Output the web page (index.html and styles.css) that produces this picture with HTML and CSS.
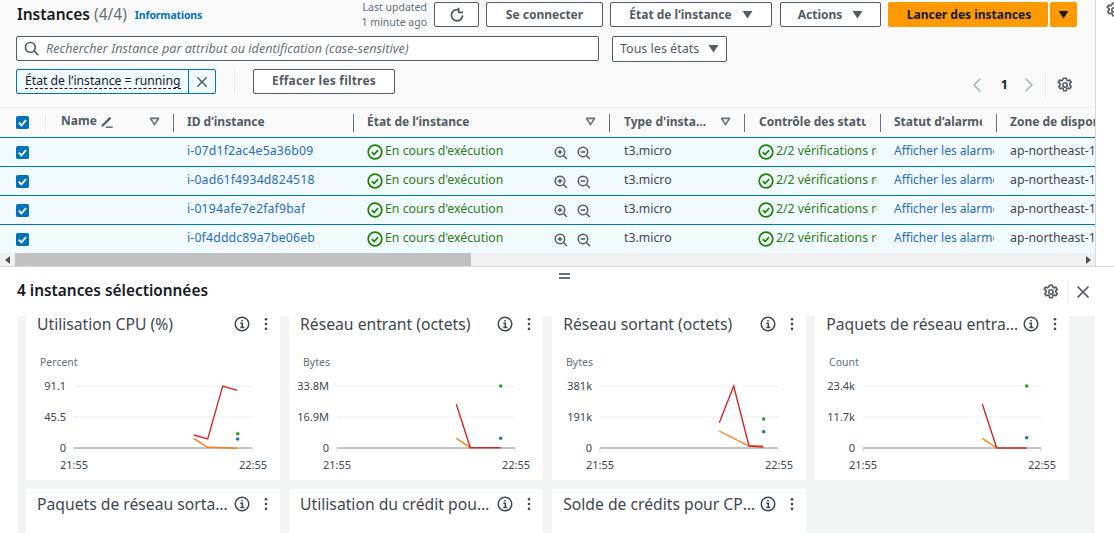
FILE: index.html
```html
<!DOCTYPE html>
<html lang="fr">
<head>
<meta charset="utf-8">
<title>Instances</title>
<link rel="stylesheet" href="styles.css">
</head>
<body>
<svg class="defs" width="0" height="0" aria-hidden="true">
  <symbol id="gear" viewBox="0 0 16 16"><path d="M6.6 1.2h2.8l.4 1.9 1.2.6 1.8-.7 1.4 2.4-1.4 1.3v1.4l1.4 1.3-1.4 2.4-1.8-.7-1.2.7-.4 1.9H6.6l-.4-1.9-1.2-.7-1.8.7-1.4-2.4 1.4-1.3V6.7L1.2 5.4l1.4-2.4 1.8.7 1.2-.6z" fill="none" stroke="currentColor" stroke-width="1.6" stroke-linejoin="round"/><circle cx="8" cy="8" r="2.2" fill="none" stroke="currentColor" stroke-width="1.6"/></symbol>
  <symbol id="check" viewBox="0 0 16 16"><circle cx="8" cy="8" r="6.8" fill="none" stroke="currentColor" stroke-width="1.7"/><path d="M4.8 8.2l2.3 2.3 4-4.3" fill="none" stroke="currentColor" stroke-width="1.7"/></symbol>
  <symbol id="zin" viewBox="0 0 16 16"><circle cx="6.8" cy="6.8" r="5.4" fill="none" stroke="currentColor" stroke-width="1.7"/><path d="M10.8 10.8l4 4M4.2 6.8h5.2M6.8 4.2v5.2" fill="none" stroke="currentColor" stroke-width="1.7"/></symbol>
  <symbol id="zout" viewBox="0 0 16 16"><circle cx="6.8" cy="6.8" r="5.4" fill="none" stroke="currentColor" stroke-width="1.7"/><path d="M10.8 10.8l4 4M4.2 6.8h5.2" fill="none" stroke="currentColor" stroke-width="1.7"/></symbol>
  <symbol id="caret" viewBox="0 0 12 10"><path d="M0.5 1h11L6 9.5z" fill="currentColor"/></symbol>
  <symbol id="sort" viewBox="0 0 12 10"><path d="M1.5 1.5h9L6 8.5z" fill="none" stroke="currentColor" stroke-width="1.8" stroke-linejoin="round"/></symbol>
  <symbol id="tick" viewBox="0 0 14 14"><rect width="14" height="14" rx="2" fill="#0073bb"/><path d="M3 7.2l2.8 2.8 5-5.6" fill="none" stroke="#fff" stroke-width="2"/></symbol>
  <symbol id="info" viewBox="0 0 16 16"><circle cx="8" cy="8" r="6.8" fill="none" stroke="currentColor" stroke-width="1.5"/><path d="M6.3 7.2H8.3V11.5M6.3 11.5h4M8 4v1.6" fill="none" stroke="currentColor" stroke-width="1.6"/></symbol>
  <symbol id="dots" viewBox="0 0 4 16"><circle cx="2" cy="2.5" r="1.5" fill="currentColor"/><circle cx="2" cy="8" r="1.5" fill="currentColor"/><circle cx="2" cy="13.5" r="1.5" fill="currentColor"/></symbol>
  <symbol id="close" viewBox="0 0 14 14"><path d="M1.5 1.5l11 11M12.5 1.5l-11 11" fill="none" stroke="currentColor" stroke-width="1.7"/></symbol>
</svg>

<div class="upper">
  <main class="top">
    <div class="bar bar-1">
      <h1 class="title">Instances <span class="count">(4/4)</span></h1>
      <a class="info-link">Informations</a>
      <div class="actions">
        <div class="updated">Last updated<br>1 minute ago</div>
        <button class="btn btn-refresh"><svg class="i16" viewBox="0 0 16 16"><path d="M13.6 8.4A5.6 5.6 0 1 1 9.8 2.9" fill="none" stroke="currentColor" stroke-width="1.8"/><path d="M9.6 0.8v4.6h4.4" fill="none" stroke="currentColor" stroke-width="1.8"/></svg></button>
        <button class="btn btn-connect">Se connecter</button>
        <button class="btn btn-state">État de l’instance <svg class="caret"><use href="#caret"/></svg></button>
        <button class="btn btn-act">Actions <svg class="caret"><use href="#caret"/></svg></button>
        <div class="launch">
          <button class="btn-primary btn-launch">Lancer des instances</button>
          <button class="btn-primary btn-more"><svg class="caret dark"><use href="#caret"/></svg></button>
        </div>
      </div>
    </div>

    <div class="bar bar-2">
      <div class="search">
        <svg class="i15" viewBox="0 0 16 16"><circle cx="6.8" cy="6.8" r="5.2" fill="none" stroke="currentColor" stroke-width="1.8"/><path d="M10.6 10.6l4.6 4.6" stroke="currentColor" stroke-width="1.8"/></svg>
        <span class="placeholder">Rechercher Instance par attribut ou identification (case-sensitive)</span>
      </div>
      <div class="select">Tous les états <svg class="caret"><use href="#caret"/></svg></div>
    </div>

    <div class="bar bar-3">
      <div class="token">
        <span class="token-text"><span class="token-label">État de l’instance = running</span></span>
        <span class="token-x"><svg class="i12"><use href="#close"/></svg></span>
      </div>
      <span class="vline"></span>
      <button class="btn btn-clear">Effacer les filtres</button>
      <div class="pager">
        <svg class="chev" viewBox="0 0 10 16"><path d="M8.5 1.5L2 8l6.5 6.5" fill="none" stroke="currentColor" stroke-width="1.6"/></svg>
        <span class="page-no">1</span>
        <svg class="chev" viewBox="0 0 10 16"><path d="M1.5 1.5L8 8l-6.5 6.5" fill="none" stroke="currentColor" stroke-width="1.6"/></svg>
        <span class="pager-sep"></span>
        <svg class="i16 gear-dark"><use href="#gear"/></svg>
      </div>
    </div>

    <div class="table">
      <div class="row head">
        <div class="c0"><svg class="tick"><use href="#tick"/></svg></div>
        <div class="th th-name"><span class="name-h">Name <svg class="i14" viewBox="0 0 16 16"><path d="M2 12.5L11 3.2l2 2-9.2 9.1-2.3.4z" fill="currentColor"/><path d="M6.5 15h8" stroke="currentColor" stroke-width="1.6"/></svg></span><svg class="sort"><use href="#sort"/></svg></div>
        <div class="th sep"><span>ID d’instance</span></div>
        <div class="th sep"><span>État de l’instance</span><svg class="sort"><use href="#sort"/></svg></div>
        <div class="th sep th-type"><span>Type d'insta…</span><svg class="sort"><use href="#sort"/></svg></div>
        <div class="th sep clip th-checks"><span>Contrôle des statuts</span></div>
        <div class="th sep clip"><span>Statut d’alarme</span></div>
        <div class="th sep clip last"><span>Zone de disponibilité</span></div>
      </div>

      <div class="row body">
        <div class="c0"><svg class="tick"><use href="#tick"/></svg></div><div class="td"></div>
        <div class="td link iid"><span>i-07d1f2ac4e5a36b09</span></div>
        <div class="td ok state"><svg class="i16"><use href="#check"/></svg><span>En cours d'exécution</span><div class="zooms"><svg class="i14"><use href="#zin"/></svg><svg class="i14"><use href="#zout"/></svg></div></div>
        <div class="td type"><span>t3.micro</span></div>
        <div class="td ok checks"><svg class="i16"><use href="#check"/></svg><span>2/2 vérifications réussies</span></div>
        <div class="td link alarms"><span>Afficher les alarmes</span></div>
        <div class="td last"><span>ap-northeast-1a</span></div>
      </div>
      <div class="row body">
        <div class="c0"><svg class="tick"><use href="#tick"/></svg></div><div class="td"></div>
        <div class="td link iid"><span>i-0ad61f4934d824518</span></div>
        <div class="td ok state"><svg class="i16"><use href="#check"/></svg><span>En cours d'exécution</span><div class="zooms"><svg class="i14"><use href="#zin"/></svg><svg class="i14"><use href="#zout"/></svg></div></div>
        <div class="td type"><span>t3.micro</span></div>
        <div class="td ok checks"><svg class="i16"><use href="#check"/></svg><span>2/2 vérifications réussies</span></div>
        <div class="td link alarms"><span>Afficher les alarmes</span></div>
        <div class="td last"><span>ap-northeast-1a</span></div>
      </div>
      <div class="row body">
        <div class="c0"><svg class="tick"><use href="#tick"/></svg></div><div class="td"></div>
        <div class="td link iid"><span>i-0194afe7e2faf9baf</span></div>
        <div class="td ok state"><svg class="i16"><use href="#check"/></svg><span>En cours d'exécution</span><div class="zooms"><svg class="i14"><use href="#zin"/></svg><svg class="i14"><use href="#zout"/></svg></div></div>
        <div class="td type"><span>t3.micro</span></div>
        <div class="td ok checks"><svg class="i16"><use href="#check"/></svg><span>2/2 vérifications réussies</span></div>
        <div class="td link alarms"><span>Afficher les alarmes</span></div>
        <div class="td last"><span>ap-northeast-1a</span></div>
      </div>
      <div class="row body">
        <div class="c0"><svg class="tick"><use href="#tick"/></svg></div><div class="td"></div>
        <div class="td link iid"><span>i-0f4dddc89a7be06eb</span></div>
        <div class="td ok state"><svg class="i16"><use href="#check"/></svg><span>En cours d'exécution</span><div class="zooms"><svg class="i14"><use href="#zin"/></svg><svg class="i14"><use href="#zout"/></svg></div></div>
        <div class="td type"><span>t3.micro</span></div>
        <div class="td ok checks"><svg class="i16"><use href="#check"/></svg><span>2/2 vérifications réussies</span></div>
        <div class="td link alarms"><span>Afficher les alarmes</span></div>
        <div class="td last"><span>ap-northeast-1a</span></div>
      </div>
    </div>

    <div class="scrollbar">
      <span class="sb-arrow"><svg class="tri" viewBox="0 0 6 8"><path d="M5 0v8L0 4z" fill="currentColor"/></svg></span>
      <span class="sb-thumb"></span>
      <span class="sb-track"></span>
      <span class="sb-arrow"><svg class="tri" viewBox="0 0 6 8"><path d="M1 0v8l5-4z" fill="currentColor"/></svg></span>
    </div>
  </main>
  <aside class="side"><svg class="i16 gear-dark"><use href="#gear"/></svg></aside>
</div>

<section class="detail">
  <span class="handle"></span>
  <header class="detail-head">
    <h2 class="detail-title">4 instances sélectionnées</h2>
    <div class="detail-tools">
      <svg class="i16 gear-dark"><use href="#gear"/></svg>
      <span class="tools-sep"></span>
      <svg class="i14 gear-dark"><use href="#close"/></svg>
    </div>
  </header>
  <div class="dash">
    <div class="grid">
      <article class="card">
        <div class="card-head"><span class="card-title">Utilisation CPU (%)</span><svg class="i16"><use href="#info"/></svg><svg class="dots"><use href="#dots"/></svg></div>
        <svg class="chart" viewBox="0 17 254 147">
          <text class="unit" x="14" y="50">Percent</text>
          <line class="gl" x1="48" x2="226" y1="70" y2="70"/><line class="gl" x1="48" x2="226" y1="101" y2="101"/>
          <line class="base" x1="48" x2="226" y1="132" y2="132"/><line class="tk" x1="48" x2="48" y1="132" y2="136"/><line class="tk" x1="226" x2="226" y1="132" y2="136"/>
          <text class="yl" x="40" y="74">91.1</text><text class="yl" x="40" y="105">45.5</text><text class="yl" x="40" y="136">0</text>
          <text class="xl" x="48" y="153">21:55</text><text class="xl" x="227" y="153">22:55</text>
          <polyline class="or" points="167.7,122.3 181.7,131.3 211.3,132.3"/>
          <polyline class="rd" points="167.7,119 181.7,123 196.7,70 211.3,74.3"/>
          <circle class="gn" cx="211.7" cy="117.7" r="1.8"/><circle class="bl" cx="211.7" cy="123" r="1.8"/>
        </svg>
      </article>
      <article class="card">
        <div class="card-head"><span class="card-title">Réseau entrant (octets)</span><svg class="i16"><use href="#info"/></svg><svg class="dots"><use href="#dots"/></svg></div>
        <svg class="chart" viewBox="0 17 254 147">
          <text class="unit" x="14" y="50">Bytes</text>
          <line class="gl" x1="48" x2="226" y1="70" y2="70"/><line class="gl" x1="48" x2="226" y1="101" y2="101"/>
          <line class="base" x1="48" x2="226" y1="132" y2="132"/><line class="tk" x1="48" x2="48" y1="132" y2="136"/><line class="tk" x1="226" x2="226" y1="132" y2="136"/>
          <text class="yl" x="40" y="74">33.8M</text><text class="yl" x="40" y="105">16.9M</text><text class="yl" x="40" y="136">0</text>
          <text class="xl" x="48" y="153">21:55</text><text class="xl" x="227" y="153">22:55</text>
          <polyline class="or" points="167.3,122.3 181.3,131.7"/>
          <polyline class="rd" points="167.3,88.3 181.3,131.7 211.7,131.7"/>
          <circle class="gn" cx="211.7" cy="70" r="1.8"/><circle class="bl" cx="211.7" cy="122.3" r="1.8"/>
        </svg>
      </article>
      <article class="card">
        <div class="card-head"><span class="card-title">Réseau sortant (octets)</span><svg class="i16"><use href="#info"/></svg><svg class="dots"><use href="#dots"/></svg></div>
        <svg class="chart" viewBox="0 17 254 147">
          <text class="unit" x="14" y="50">Bytes</text>
          <line class="gl" x1="48" x2="226" y1="70" y2="70"/><line class="gl" x1="48" x2="226" y1="101" y2="101"/>
          <line class="base" x1="48" x2="226" y1="132" y2="132"/><line class="tk" x1="48" x2="48" y1="132" y2="136"/><line class="tk" x1="226" x2="226" y1="132" y2="136"/>
          <text class="yl" x="40" y="74">381k</text><text class="yl" x="40" y="105">191k</text><text class="yl" x="40" y="136">0</text>
          <text class="xl" x="48" y="153">21:55</text><text class="xl" x="227" y="153">22:55</text>
          <polyline class="or" points="167.3,115 197,130 211.3,130"/>
          <polyline class="rd" points="167.3,106.7 181.7,70 197,130 211.3,131"/>
          <circle class="gn" cx="211.7" cy="103" r="1.8"/><circle class="bl" cx="211.7" cy="115.7" r="1.8"/>
        </svg>
      </article>
      <article class="card">
        <div class="card-head"><span class="card-title">Paquets de réseau entrants (nombre)</span><svg class="i16"><use href="#info"/></svg><svg class="dots"><use href="#dots"/></svg></div>
        <svg class="chart" viewBox="0 17 254 147">
          <text class="unit" x="14" y="50">Count</text>
          <line class="gl" x1="48" x2="226" y1="70" y2="70"/><line class="gl" x1="48" x2="226" y1="101" y2="101"/>
          <line class="base" x1="48" x2="226" y1="132" y2="132"/><line class="tk" x1="48" x2="48" y1="132" y2="136"/><line class="tk" x1="226" x2="226" y1="132" y2="136"/>
          <text class="yl" x="40" y="74">23.4k</text><text class="yl" x="40" y="105">11.7k</text><text class="yl" x="40" y="136">0</text>
          <text class="xl" x="48" y="153">21:55</text><text class="xl" x="227" y="153">22:55</text>
          <polyline class="or" points="167.3,122.3 181.7,132"/>
          <polyline class="rd" points="167.3,88 181.7,132 211.7,132"/>
          <circle class="gn" cx="211.7" cy="70" r="1.8"/><circle class="bl" cx="211.7" cy="121.7" r="1.8"/>
        </svg>
      </article>
      <article class="card">
        <div class="card-head"><span class="card-title">Paquets de réseau sortants (nombre)</span><svg class="i16"><use href="#info"/></svg><svg class="dots"><use href="#dots"/></svg></div>
      </article>
      <article class="card">
        <div class="card-head"><span class="card-title">Utilisation du crédit pour CPU (nombre)</span><svg class="i16"><use href="#info"/></svg><svg class="dots"><use href="#dots"/></svg></div>
      </article>
      <article class="card">
        <div class="card-head"><span class="card-title">Solde de crédits pour CPU (nombre)</span><svg class="i16"><use href="#info"/></svg><svg class="dots"><use href="#dots"/></svg></div>
      </article>
    </div>
  </div>
</section>
</body>
</html>
```
FILE: styles.css
```css
* { box-sizing: border-box; }
html, body { margin: 0; padding: 0; height: 100%; overflow: hidden; background: #fff; }
body { font-family: "Noto Sans", "Liberation Sans", sans-serif; font-size: 13px; color: #16191f; width: 1114px; height: 533px; }
.defs { display: block; width: 0; height: 0; }
svg { display: block; flex: none; }
.i12 { width: 12px; height: 12px; }
.i14 { width: 14px; height: 14px; }
.i15 { width: 15px; height: 15px; }
.i16 { width: 16px; height: 16px; }
.upper { display: flex; height: 266px; }
.top { width: 1096px; height: 266px; background: #fafafa; border-right: 1px solid #d5dbdb; overflow: hidden; flex: none; }
.side { flex: 1; overflow: hidden; padding: 2px 0 0 10px; }
.bar { display: flex; align-items: center; }
.bar-1 { height: 27px; margin-top: 1px; padding-left: 17px; padding-right: 18px; }
.title { margin: 0 0 2px; font-size: 15.5px; font-weight: 600; color: #16191f; line-height: 22px; }
.count { font-weight: 400; color: #687078; }
.info-link { font-size: 10.5px; font-weight: 700; color: #0073bb; margin-left: 8px; letter-spacing: -0.15px; }
.actions { margin-left: auto; display: flex; align-items: center; }
.updated { font-size: 10.5px; line-height: 15px; color: #687078; text-align: right; margin: 1px 7px 0 0; }
.btn { height: 25px; background: #fff; border: 1px solid #545b64; border-radius: 2px; color: #545b64; font: 700 12px "Noto Sans", sans-serif; display: flex; align-items: center; justify-content: center; padding: 0; }
.btn-refresh { width: 45px; margin-right: 7px; }
.btn-connect { width: 117px; margin-right: 7px; }
.btn-state { width: 162px; margin-right: 8px; gap: 10px; }
.btn-act { width: 101px; margin-right: 7px; gap: 10px; }
.caret { width: 11px; height: 9px; color: #545b64; }
.caret.dark { color: #16191f; }
.launch { display: flex; gap: 2px; }
.btn-primary { height: 25px; border: 0; border-radius: 2px; background: #ff9900; color: #16191f; font: 700 12px "Noto Sans", sans-serif; padding: 0; display: flex; align-items: center; justify-content: center; }
.btn-launch { width: 160px; padding-left: 2px; }
.btn-more { width: 27px; }
.bar-2 { height: 25px; margin-top: 8px; padding-left: 16px; }
.search { width: 583px; height: 25px; background: #fff; border: 1px solid #545b64; border-radius: 2px; display: flex; align-items: center; padding-left: 7px; color: #545b64; gap: 7px; }
.placeholder { font-style: italic; font-size: 12.5px; letter-spacing: 0.05px; color: #687078; white-space: nowrap; }
.select { margin-left: 13px; width: 115px; height: 26px; background: #fff; border: 1px solid #545b64; border-radius: 2px; display: flex; align-items: center; padding-left: 7px; gap: 9px; font-size: 12.5px; color: #545b64; }
.bar-3 { height: 25px; margin-top: 8px; padding-left: 16px; padding-right: 22px; }
.token { width: 200px; height: 25px; background: #f1faff; border: 1px solid #0073bb; border-radius: 2px; display: flex; }
.token-text { width: 172px; padding: 0 0 2px 8px; border-right: 1px solid #0073bb; display: flex; align-items: center; white-space: nowrap; overflow: hidden; }
.token-label { font-size: 12.2px; color: #16191f; border-bottom: 1px dashed #16191f; line-height: 15px; }
.token-x { flex: 1; display: flex; align-items: center; justify-content: center; color: #545b64; }
.vline { width: 1px; height: 25px; background: #eaeded; margin-left: 18px; }
.btn-clear { width: 142px; margin-left: 18px; padding-bottom: 2px; letter-spacing: 0.2px; }
.pager { margin-left: auto; display: flex; align-items: center; color: #16191f; margin-top: 6px; }
.chev { width: 10px; height: 16px; color: #aab7b8; }
.page-no { font-size: 12.5px; font-weight: 700; margin: 0 16px 0 19px; }
.pager-sep { width: 1px; height: 26px; background: #eaeded; margin: 0 11px 0 11px; }
.gear-dark { color: #545b64; }
.table { margin-top: 13px; }
.row { display: grid; grid-template-columns: 46px 127px 180px 256px 135px 136px 116px 100px; align-items: center; white-space: nowrap; }
.head { height: 30px; border-top: 1px solid #eaeded; background: #fafafa; }
.c0 { padding-left: 16px; height: 18px; display: flex; align-items: center; }
.head .c0 { border-right: 1px solid #eaeded; }
.tick { width: 13px; height: 13px; }
.th { height: 18px; padding: 0 13px 2px 14px; display: flex; align-items: center; justify-content: space-between; overflow: hidden; font-weight: 700; font-size: 12px; color: #545b64; }
.th-name { padding-left: 15px; }
.sep { border-left: 1px solid #687078; padding-left: 13px; }
.th-type, .th-checks { padding-left: 14px; }
.clip { padding-right: 14px; display: block; line-height: 16px; }
.clip span { display: block; overflow: hidden; }
.clip.last { padding-right: 0; }
.name-h { display: flex; align-items: center; gap: 3px; margin-top: -2px; }
.sort { width: 11px; height: 9px; color: #687078; }
.body { height: 29px; border-top: 1px solid #0073bb; background: #f1faff; }
.body .c0 { height: 28px; }
.td { padding: 0 2px 0 14px; overflow: hidden; font-size: 12.3px; color: #414750; display: flex; align-items: center; gap: 2px; line-height: 16px; height: 28px; }
.td > span { padding-bottom: 3px; min-width: 0; overflow: hidden; }
.td.last { padding-right: 0; }
.link { color: #2a6db8; }
.iid { letter-spacing: 0.15px; }
.alarms { font-size: 12px; }
.type { padding-left: 15px; }
.ok { color: #2f7d10; }
.ok > svg { color: #1d8102; }
.state > span { flex: none; }
.checks { padding-right: 3px; }
.zooms { margin-left: auto; padding: 1px 16px 0 0; display: flex; gap: 9px; color: #545b64; }
.scrollbar { display: flex; height: 14px; background: #f1f1f1; }
.sb-arrow { width: 15px; display: flex; align-items: center; justify-content: center; color: #505050; }
.tri { width: 6px; height: 8px; }
.sb-thumb { width: 456px; background: #c1c1c1; }
.sb-track { flex: 1; }
.detail { position: relative; border-top: 1px solid #d5dbdb; height: 267px; background: #fff; }
.handle { position: absolute; left: 559px; top: 6px; width: 11px; height: 6px; border-top: 2px solid #687078; border-bottom: 2px solid #687078; }
.detail-head { height: 49px; display: flex; align-items: center; padding: 0 24px 0 17px; }
.detail-title { margin: 0 0 3px; font-size: 15.4px; font-weight: 600; color: #16191f; }
.detail-tools { margin-left: auto; display: flex; align-items: center; margin-top: 1px; }
.tools-sep { width: 1px; height: 22px; background: #eaeded; margin: 0 8px 0 8px; }
.dash { margin-left: 18px; width: 1077px; height: 217px; background: #f2f3f3; overflow: hidden; padding-left: 8px; }
.grid { display: grid; grid-template-columns: repeat(4, 254px); column-gap: 9.1px; row-gap: 9px; margin-top: -7px; }
.card { background: #fff; height: 171px; overflow: hidden; }
.card-head { display: flex; align-items: center; height: 18px; margin: 6px 0 0; padding: 0 6px 0 11px; color: #414750; }
.card-title { flex: 1; min-width: 0; white-space: nowrap; overflow: hidden; text-overflow: ellipsis; font-size: 15.7px; color: #414750; padding-right: 3px; }
.dots { width: 4px; height: 14px; margin: 0 6px 0 14px; }
.chart { width: 254px; height: 147px; }
.chart text { font-family: "Noto Sans", sans-serif; font-size: 11px; fill: #414750; }
.chart .unit { fill: #687078; font-size: 10.5px; }
.chart .yl { text-anchor: end; }
.chart .xl { text-anchor: middle; }
.gl { stroke: #eaeded; stroke-width: 1; }
.base { stroke: #c4c4c4; stroke-width: 2; }
.tk { stroke: #d5dbdb; stroke-width: 1; }
.rd { fill: none; stroke: #d62728; stroke-width: 1.4; }
.or { fill: none; stroke: #ff7f0e; stroke-width: 1.4; }
.gn { fill: #2ca02c; }
.bl { fill: #1f77b4; }
```
